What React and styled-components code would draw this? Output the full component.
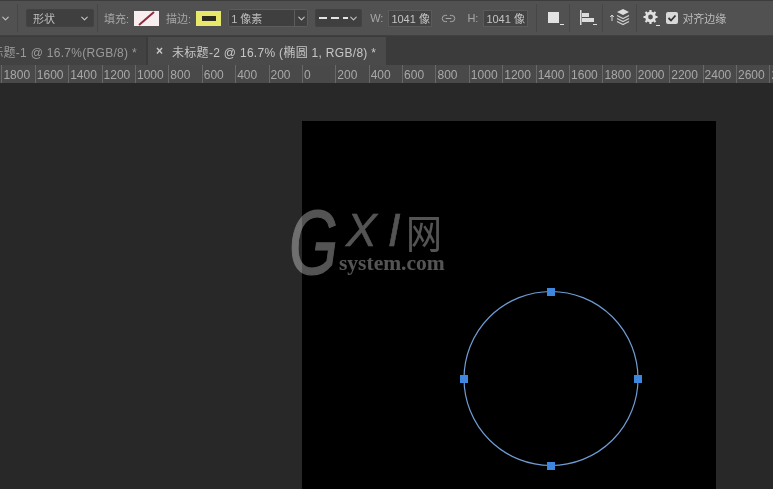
import React from 'react';
import styled, { createGlobalStyle } from 'styled-components';
import { ChevronDown, Link2 } from 'lucide-react';

const GlobalStyle = createGlobalStyle`
  html, body {
    margin: 0;
    background: #282828;
  }
  * {
    box-sizing: border-box;
  }
`;

const Window = styled.div`
  width: 773px;
  height: 489px;
  display: flex;
  flex-direction: column;
  overflow: hidden;
  font-family: "Liberation Sans", "Noto Sans CJK SC", sans-serif;
  font-size: 11px;
  color: #b4b4b4;
  filter: blur(0.35px);
`;

const Toolbar = styled.div`
  height: 36px;
  flex: none;
  display: flex;
  align-items: center;
  background: #515151;
  border-top: 1px solid #3c3c3c;
  border-bottom: 1px solid #404040;
`;

const Separator = styled.div`
  width: 1px;
  height: 28px;
  flex: none;
  background: #474747;
  margin-left: ${p => p.$ml}px;
`;

const Select = styled.div`
  width: ${p => p.$w}px;
  height: 18px;
  flex: none;
  margin-left: ${p => p.$ml}px;
  display: flex;
  align-items: center;
  justify-content: space-between;
  padding: ${p => p.$pad || '0 3px 0 6px'};
  background: #3f3f3f;
  border: 1px solid ${p => (p.$outlined ? '#5c5c5c' : '#424242')};
  border-radius: 2px;
  color: #bdbdbd;
`;

const SelectSplit = styled.span`
  height: 100%;
  width: 13px;
  display: flex;
  align-items: center;
  justify-content: center;
  border-left: 1px solid #5c5c5c;
`;

const Label = styled.span`
  flex: none;
  margin-left: ${p => p.$ml}px;
  color: ${p => p.$color || '#a6a6a6'};
  white-space: nowrap;
`;

const Swatch = styled.div`
  width: 25px;
  height: 15px;
  flex: none;
  margin-left: ${p => p.$ml}px;
  background: ${p => p.$bg};
  display: flex;
  align-items: center;
  justify-content: center;
`;

const StrokeBar = styled.div`
  width: 14px;
  height: 5px;
  background: #2b2b20;
`;

const Dash = styled.span`
  width: 34px;
  height: 2px;
  background: repeating-linear-gradient(90deg, #e4e4e4 0 8px, transparent 8px 12px);
`;

const NumberBox = styled.div`
  width: ${p => p.$w}px;
  height: 17px;
  flex: none;
  margin-left: ${p => p.$ml}px;
  display: flex;
  align-items: center;
  padding-left: 2px;
  background: #434343;
  border: 1px solid #5a5a5a;
  color: #c4c4c4;
  white-space: nowrap;
  overflow: hidden;
`;

const ToolIcon = styled.svg`
  flex: none;
  display: block;
  margin-left: ${p => p.$ml}px;
`;

const IconSlot = styled.div`
  flex: none;
  display: flex;
  margin-left: ${p => p.$ml}px;
`;

const CheckBox = styled.div`
  width: 12px;
  height: 12px;
  flex: none;
  margin-left: ${p => p.$ml}px;
  background: #d8d8d8;
  border-radius: 2px;
  display: flex;
  align-items: center;
  justify-content: center;
`;

const TabBar = styled.div`
  height: 29px;
  flex: none;
  display: flex;
  padding-top: 1px;
  background: #3b3b3b;
`;

const Tab = styled.div`
  height: 100%;
  flex: none;
  width: ${p => p.$w}px;
  margin-right: 2px;
  display: flex;
  align-items: center;
  justify-content: ${p => (p.$active ? 'flex-start' : 'flex-end')};
  padding: ${p => (p.$active ? '0 0 0 8px' : '0 9px 0 0')};
  background: ${p => (p.$active ? '#4a4a4a' : '#424242')};
  color: ${p => (p.$active ? '#c6c6c6' : '#9a9a9a')};
  font-size: 12px;
  letter-spacing: 0.3px;
  white-space: nowrap;
  overflow: hidden;
`;

const TabClose = styled.span`
  width: 16px;
  flex: none;
  font-size: 12px;
  font-weight: bold;
  color: #c8c8c8;
`;

const Ruler = styled.div`
  height: 18px;
  flex: none;
  display: flex;
  padding-left: 1.4px;
  background: #494949;
  overflow: hidden;
`;

const RulerCell = styled.div`
  width: 33.4px;
  flex: none;
  height: 100%;
  padding: 3px 0 0 1px;
  border-left: 1px solid #686868;
  font-size: 12px;
  line-height: 14px;
  color: #a8a8a8;
  white-space: nowrap;
`;

const Workspace = styled.div`
  position: relative;
  flex: 1;
  padding: 38px 0 0 302px;
  background: #282828;
`;

const Canvas = styled.div`
  width: 414px;
  height: 100%;
  background: #000;
`;

const Watermark = styled.div`
  position: absolute;
  left: 289px;
  top: 118px;
  width: 170px;
  height: 90px;
  color: #fff;
  opacity: 0.33;
  pointer-events: none;
`;

const MarkG = styled.span`
  position: absolute;
  left: 0;
  top: -3px;
  font-size: 90px;
  line-height: 90px;
  font-style: italic;
  -webkit-text-stroke: 1.2px #fff;
  transform: scaleX(0.7);
  transform-origin: left top;
`;

const MarkXI = styled.span`
  position: absolute;
  left: 57px;
  top: 6px;
  font-size: 46px;
  line-height: 46px;
  font-style: italic;
  letter-spacing: 11px;
  -webkit-text-stroke: 0.5px #fff;
`;

const MarkNet = styled.span`
  position: absolute;
  left: 117px;
  top: 3px;
  font-size: 36px;
  line-height: 46px;
  font-family: "Noto Sans CJK SC", sans-serif;
  transform: scaleY(1.12);
  transform-origin: left top;
`;

const MarkDomain = styled.span`
  position: absolute;
  left: 50px;
  top: 50px;
  font-family: "Liberation Serif", serif;
  font-weight: bold;
  font-size: 21.5px;
  line-height: 24px;
`;

const rulerValues = [1800, 1600, 1400, 1200, 1000, 800, 600, 400, 200, 0, 200, 400, 600, 800, 1000, 1200, 1400, 1600, 1800, 2000, 2200, 2400, 2600, 2800];

const Chevron = () => (
  <ChevronDown size={11} strokeWidth={2.4} color="#c4c4c4" style={{ flex: 'none' }} />
);

const ShapeCircle = () => (
  <svg width="414" height="368" viewBox="0 0 414 368" style={{ display: 'block' }}>
    <circle cx="249" cy="257.5" r="87" fill="none" stroke="#6f9cd4" strokeWidth="1.2" />
    <rect x="245" y="167" width="8" height="8" fill="#3d87e0" />
    <rect x="245" y="341" width="8" height="8" fill="#3d87e0" />
    <rect x="158" y="254" width="8" height="8" fill="#3d87e0" />
    <rect x="332" y="254" width="8" height="8" fill="#3d87e0" />
  </svg>
);

const App = () => (
  <Window>
    <GlobalStyle />
    <Toolbar>
      <IconSlot $ml={0}><Chevron /></IconSlot>
      <Separator $ml={6} />
      <Select $w={68} $ml={8}>
        形状
        <Chevron />
      </Select>
      <Separator $ml={3} />
      <Label $ml={6}>填充:</Label>
      <Swatch $ml={5} $bg="#f8eef0">
        <svg width="25" height="15" viewBox="0 0 25 15">
          <line x1="5" y1="14" x2="20" y2="1" stroke="#8c2a3c" strokeWidth="2" />
        </svg>
      </Swatch>
      <Label $ml={7}>描边:</Label>
      <Swatch $ml={5} $bg="#e8e86a">
        <StrokeBar />
      </Swatch>
      <Select $w={80} $ml={7} $outlined $pad="0 0 0 2px">
        1 像素
        <SelectSplit><Chevron /></SelectSplit>
      </Select>
      <Select $w={47} $ml={7} $pad="0 2px 0 3px">
        <Dash />
        <Chevron />
      </Select>
      <Label $ml={8}>W:</Label>
      <NumberBox $w={44} $ml={5}>1041 像</NumberBox>
      <IconSlot $ml={9}>
        <Link2 size={15} color="#a8a8a8" strokeWidth={1.6} />
      </IconSlot>
      <Label $ml={11}>H:</Label>
      <NumberBox $w={45} $ml={5}>1041 像</NumberBox>
      <Separator $ml={8} />
      <ToolIcon $ml={11} width="16" height="16" viewBox="0 0 16 16">
        <rect x="0" y="2" width="11" height="11" fill="#e2e2e2" />
        <rect x="12" y="14" width="4" height="1" fill="#e2e2e2" />
      </ToolIcon>
      <Separator $ml={5} />
      <ToolIcon $ml={10} width="18" height="18" viewBox="0 0 18 18">
        <rect x="0" y="1" width="1.5" height="15" fill="#dcdcdc" />
        <rect x="2" y="4" width="7" height="4" fill="#dcdcdc" />
        <rect x="2" y="9" width="12" height="4" fill="#dcdcdc" />
        <rect x="13" y="15" width="4" height="1" fill="#dcdcdc" />
      </ToolIcon>
      <Separator $ml={4} />
      <ToolIcon $ml={6} width="21" height="20" viewBox="0 0 21 20">
        <path d="M3 7v6M1.200 9l1.800-2 1.800 2" fill="none" stroke="#d8d8d8" strokeWidth="1" />
        <path d="M14 1l6 3-6 3-6-3z" fill="#dcdcdc" />
        <path d="M8 7.500l6 3 6-3M8 10.500l6 3 6-3M8 13.500l6 3 6-3" fill="none" stroke="#cfcfcf" strokeWidth="1.200" />
      </ToolIcon>
      <Separator $ml={6} />
      <ToolIcon $ml={6} width="18" height="18" viewBox="0 0 18 18">
        <circle cx="7.500" cy="8" r="3.900" fill="none" stroke="#e0e0e0" strokeWidth="3" />
        <path d="M7.500 1v3M7.500 12v3M.5 8h3M11.500 8h3M2.500 3l2 2M10.500 11l2 2M12.500 3l-2 2M4.500 11l-2 2" stroke="#e0e0e0" strokeWidth="2.200" />
        <rect x="13" y="16" width="4" height="1" fill="#e0e0e0" />
      </ToolIcon>
      <CheckBox $ml={5}>
        <svg width="10" height="10" viewBox="0 0 10 10">
          <path d="M1.500 5l2.500 2.500 4.500-5" fill="none" stroke="#333" strokeWidth="1.800" />
        </svg>
      </CheckBox>
      <Label $ml={4} $color="#bcbcbc">对齐边缘</Label>
    </Toolbar>
    <TabBar>
      <Tab $w={146}>未标题-1 @ 16.7%(RGB/8) *</Tab>
      <Tab $w={238} $active>
        <TabClose>×</TabClose>
        未标题-2 @ 16.7% (椭圆 1, RGB/8) *
      </Tab>
    </TabBar>
    <Ruler>
      {rulerValues.map((value, i) => (
        <RulerCell key={i}>{value}</RulerCell>
      ))}
    </Ruler>
    <Workspace>
      <Canvas>
        <ShapeCircle />
      </Canvas>
      <Watermark>
        <MarkG>G</MarkG>
        <MarkXI>XI</MarkXI>
        <MarkNet>网</MarkNet>
        <MarkDomain>system.com</MarkDomain>
      </Watermark>
    </Workspace>
  </Window>
);

export default App;
